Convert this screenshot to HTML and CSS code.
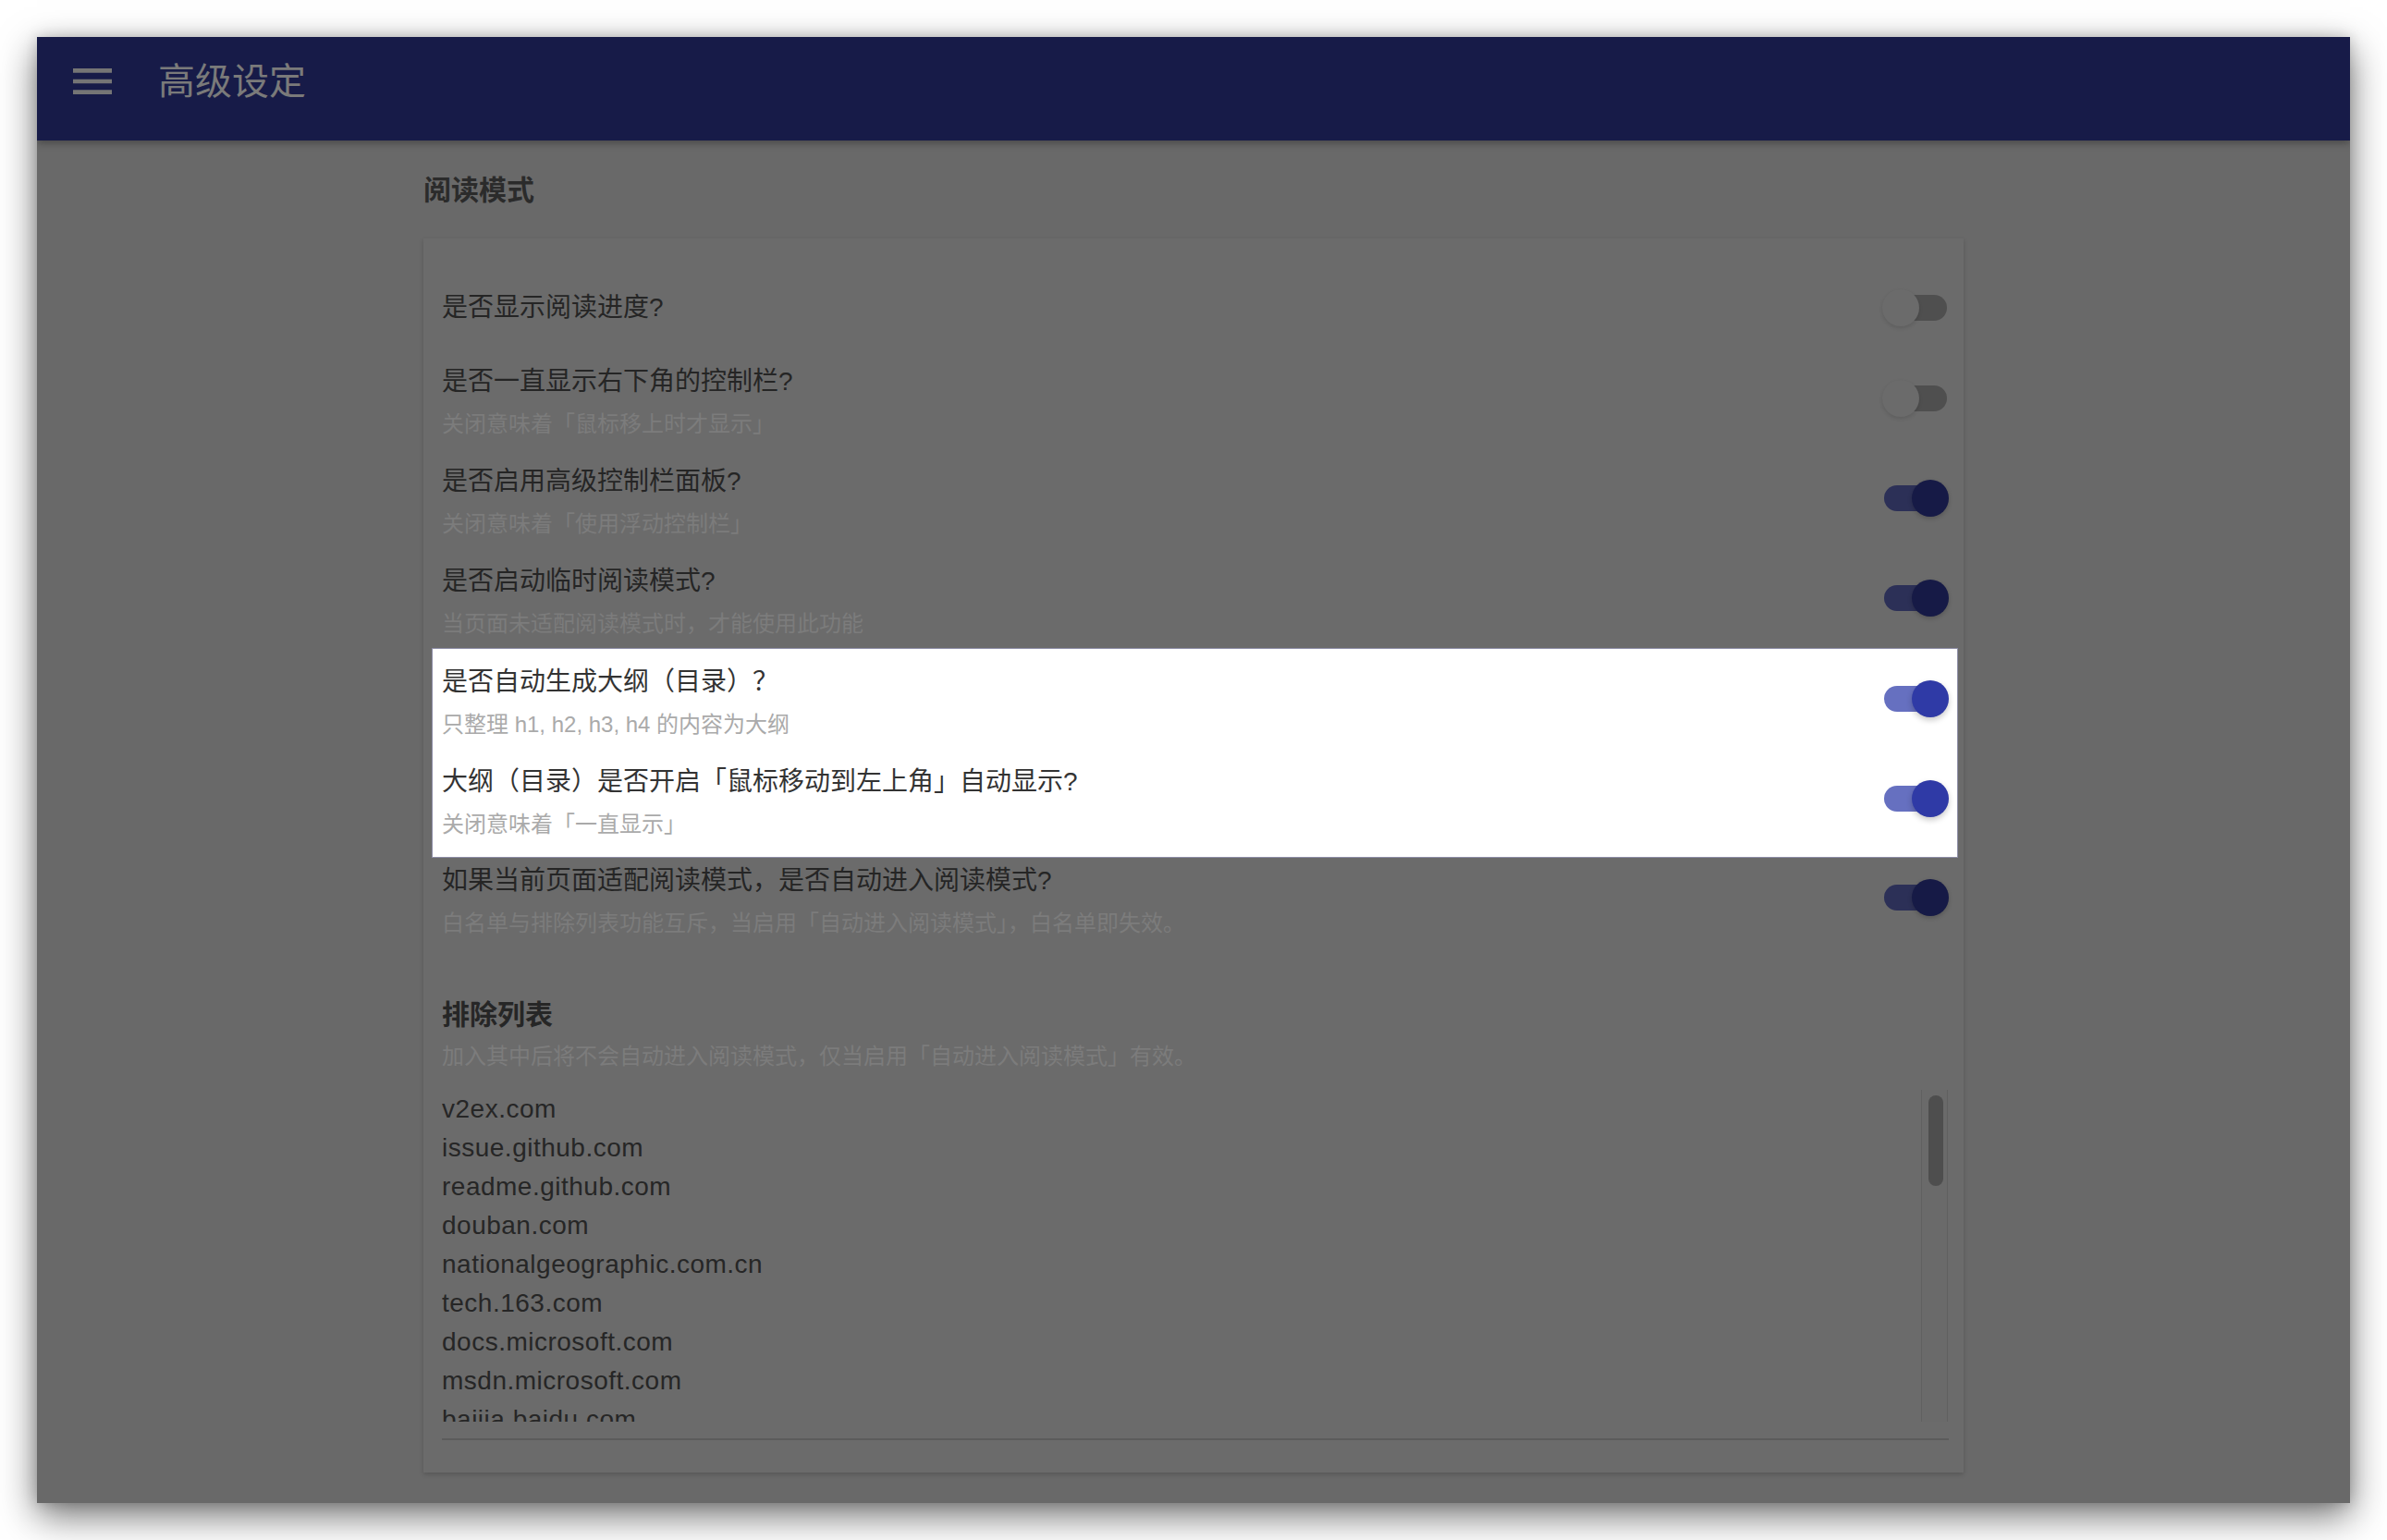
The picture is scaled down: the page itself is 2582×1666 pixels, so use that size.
FILE: index.html
```html
<!DOCTYPE html>
<html lang="zh-CN">
  <head>
    <meta charset="UTF-8" />
    <title>高级设定</title>
    <link rel="stylesheet" href="styles.css">
  </head>
  <body>
    <div class="window">
      <header class="appbar">
        <svg class="menu-icon" viewBox="0 0 24 24">
          <path d="M3 18h18v-2H3v2zm0-5h18v-2H3v2zm0-7v2h18V6H3z" />
        </svg>
        <h1 class="appbar-title">高级设定</h1>
      </header>

      <main class="content">
        <h2 class="section-title">阅读模式</h2>

        <div class="card">
          <div class="row row-single">
            <div class="row-text">
              <div class="row-title">是否显示阅读进度?</div>
            </div>
            <span class="switch"><span class="track"></span><span class="knob"></span></span>
          </div>

          <div class="row">
            <div class="row-text">
              <div class="row-title">是否一直显示右下角的控制栏?</div>
              <div class="row-sub">关闭意味着「鼠标移上时才显示」</div>
            </div>
            <span class="switch"><span class="track"></span><span class="knob"></span></span>
          </div>

          <div class="row">
            <div class="row-text">
              <div class="row-title">是否启用高级控制栏面板?</div>
              <div class="row-sub">关闭意味着「使用浮动控制栏」</div>
            </div>
            <span class="switch on"><span class="track"></span><span class="knob"></span></span>
          </div>

          <div class="row">
            <div class="row-text">
              <div class="row-title">是否启动临时阅读模式?</div>
              <div class="row-sub">当页面未适配阅读模式时，才能使用此功能</div>
            </div>
            <span class="switch on"><span class="track"></span><span class="knob"></span></span>
          </div>

          <!-- guide step: highlighted block -->
          <div class="spotlight">
            <div class="row">
              <div class="row-text">
                <div class="row-title">是否自动生成大纲（目录）？</div>
                <div class="row-sub">只整理 h1, h2, h3, h4 的内容为大纲</div>
              </div>
              <span class="switch on"><span class="track"></span><span class="knob"></span></span>
            </div>

            <div class="row">
              <div class="row-text">
                <div class="row-title">大纲（目录）是否开启「鼠标移动到左上角」自动显示?</div>
                <div class="row-sub">关闭意味着「一直显示」</div>
              </div>
              <span class="switch on"><span class="track"></span><span class="knob"></span></span>
            </div>
          </div>

          <div class="row">
            <div class="row-text">
              <div class="row-title">如果当前页面适配阅读模式，是否自动进入阅读模式?</div>
              <div class="row-sub">白名单与排除列表功能互斥，当启用「自动进入阅读模式」，白名单即失效。</div>
            </div>
            <span class="switch on"><span class="track"></span><span class="knob"></span></span>
          </div>

          <div class="exclude">
            <h3 class="exclude-title">排除列表</h3>
            <p class="exclude-hint">加入其中后将不会自动进入阅读模式，仅当启用「自动进入阅读模式」有效。</p>
            <div class="domain-field">
              <div class="domain-box">
                <div class="domains">
                  <div>v2ex.com</div>
                  <div>issue.github.com</div>
                  <div>readme.github.com</div>
                  <div>douban.com</div>
                  <div>nationalgeographic.com.cn</div>
                  <div>tech.163.com</div>
                  <div>docs.microsoft.com</div>
                  <div>msdn.microsoft.com</div>
                  <div>baijia.baidu.com</div>
                </div>
                <div class="scrollbar"><div class="thumb"></div></div>
              </div>
            </div>
          </div>
        </div>
      </main>
    </div>
  </body>
</html>
```

FILE: styles.css
```css
html,
body {
  margin: 0;
  background: #fff;
}
body {
  padding: 40px;
  font-family: "Liberation Sans", "Noto Sans CJK SC", sans-serif;
}
.window {
  width: 2502px;
  height: 1586px;
  background: #696969;
  overflow: hidden;
  box-shadow: 0 14px 38px rgba(0, 0, 0, 0.55), 0 0 14px rgba(0, 0, 0, 0.18);
}

/* app bar */
.appbar {
  position: relative;
  z-index: 1;
  display: flex;
  align-items: center;
  height: 112px;
  box-sizing: border-box;
  padding: 0 0 16px 32px;
  background: #171b48;
  box-shadow: 0 3px 8px rgba(0, 0, 0, 0.3);
}
.menu-icon {
  width: 56px;
  height: 56px;
  fill: #757575;
}
.appbar-title {
  margin: 0 0 0 43px;
  font-size: 40px;
  font-weight: 400;
  line-height: 48px;
  color: #7a7a7a;
}

/* content */
.content {
  width: 1666px;
  margin: 0 auto;
  padding-top: 34px;
}
.section-title {
  margin: 0 0 32px;
  font-size: 30px;
  line-height: 40px;
  font-weight: bold;
  color: #2b2b2b;
}
.card {
  background: #6b6b6b;
  padding: 39px 16px 35px 20px;
  box-shadow: 0 2px 5px rgba(0, 0, 0, 0.18);
}

.row {
  display: flex;
  align-items: center;
  justify-content: space-between;
  padding: 16px 0 8px;
}
.row-single {
  padding-bottom: 24px;
}
.row-text {
  display: flex;
  flex-direction: column;
}
.row-title {
  font-size: 28px;
  line-height: 40px;
  color: #252525;
}
.row-sub {
  margin-top: 8px;
  font-size: 24px;
  line-height: 36px;
  color: #7c7c7c;
}

/* switch */
.switch {
  position: relative;
  flex: none;
  width: 72px;
  height: 40px;
  margin-bottom: 8px;
}
.row-single .switch {
  margin-bottom: 0;
}
.switch .track {
  position: absolute;
  left: 2px;
  right: 2px;
  top: 6px;
  height: 28px;
  border-radius: 14px;
  background: #4f4f4f;
}
.switch .knob {
  position: absolute;
  left: 0;
  top: 0;
  width: 40px;
  height: 40px;
  border-radius: 50%;
  background: #6b6b6b;
  box-shadow: 0 2px 4px rgba(0, 0, 0, 0.12);
}
.switch.on .track {
  background: #2c3057;
}
.switch.on .knob {
  left: 32px;
  background: #161a46;
  box-shadow: 0 2px 5px rgba(0, 0, 0, 0.2);
}

/* highlighted step */
.spotlight {
  margin: 0 -10px -11px -11px;
  padding: 0 9px 9px 10px;
  border: 1px solid #8d8da6;
  background: #fff;
}
.spotlight .row-title {
  color: #333;
}
.spotlight .row-sub {
  color: #aaa;
}
.spotlight .switch.on .track {
  background: #6670c0;
}
.spotlight .switch.on .knob {
  background: #2f3aa6;
  box-shadow: 0 3px 6px rgba(0, 0, 0, 0.22);
}

/* exclude list */
.exclude {
  margin-top: 53px;
}
.exclude-title {
  margin: 0;
  font-size: 30px;
  line-height: 40px;
  font-weight: bold;
  color: #262626;
}
.exclude-hint {
  margin: 7px 0 0;
  font-size: 24px;
  line-height: 36px;
  color: #7c7c7c;
}
.domain-field {
  margin-top: 18px;
  padding-bottom: 18px;
  border-bottom: 2px solid #5b5b5b;
}
.domain-box {
  position: relative;
  height: 359px;
  overflow: hidden;
}
.domains {
  font-size: 28px;
  line-height: 42px;
  letter-spacing: 0.5px;
  color: #262626;
}
.scrollbar {
  position: absolute;
  top: 0;
  right: 1px;
  bottom: 0;
  width: 27px;
  border-left: 1px solid #606060;
  border-right: 1px solid #606060;
  background: #6a6a6a;
}
.thumb {
  margin: 6px 0 0 7px;
  width: 16px;
  height: 98px;
  border-radius: 8px;
  background: #4e4e4e;
}
```
